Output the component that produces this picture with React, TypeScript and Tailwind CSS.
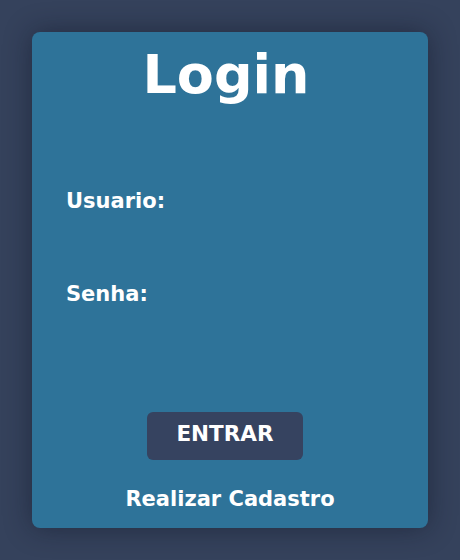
export default function App() {
  return (
    <div className="min-h-screen bg-[#35425c] p-8 font-['DejaVu_Sans',Verdana,sans-serif] text-white">
      <div className="flex h-[496px] flex-col rounded-lg bg-[#2e7399] shadow-[0_0_28px_rgba(10,15,30,0.45)]">
        <h1 className="mt-[13px] pr-2 text-center text-[54px] font-bold leading-[60px]">Login</h1>

        <label className="mt-[84px] pl-[34px] text-[21px] font-bold leading-[25px]">Usuario:</label>
        <label className="mt-[68px] pl-[34px] text-[21px] font-bold leading-[25px]">Senha:</label>

        <div className="mt-[105px] flex justify-center">
          <button className="ml-[-10px] h-[48px] w-[156px] rounded-md bg-[#364360] pb-1 text-[21.5px] font-bold">
            ENTRAR
          </button>
        </div>

        <a className="mt-[27px] text-center text-[21px] font-bold leading-[25px]">Realizar Cadastro</a>
      </div>
    </div>
  );
}
